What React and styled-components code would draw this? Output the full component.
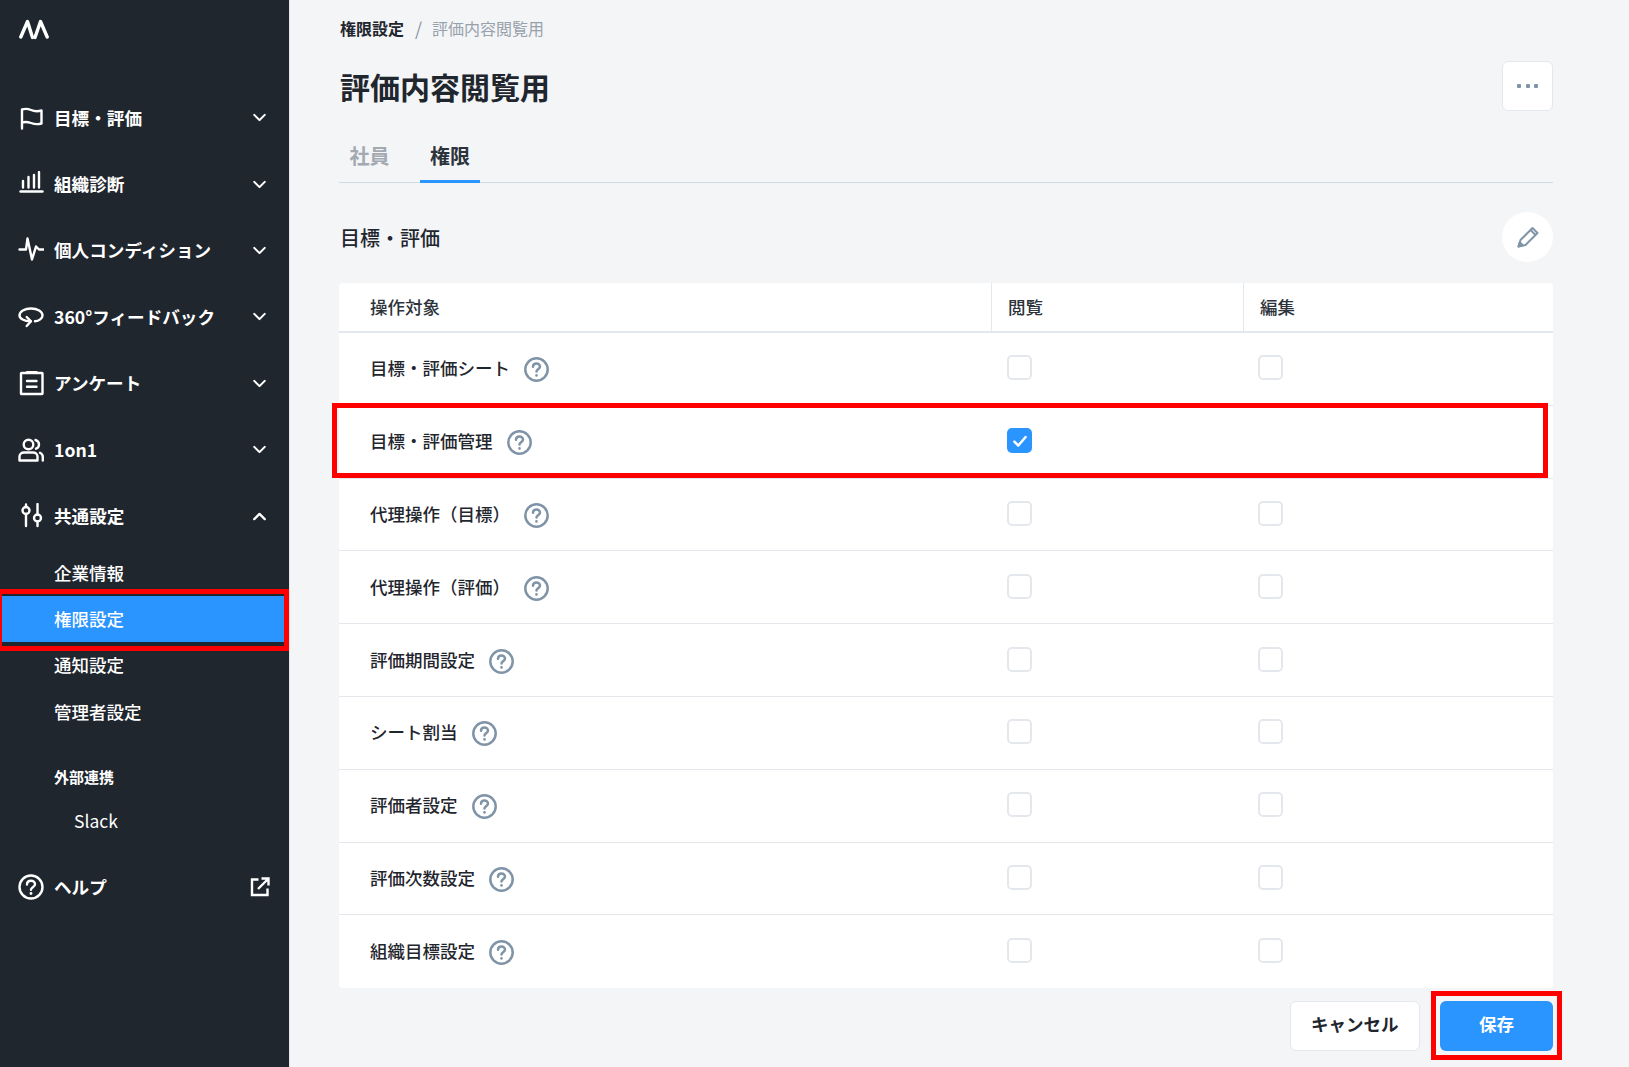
import React from 'react';
import styled, { createGlobalStyle } from 'styled-components';
import { ChevronDown, ChevronUp } from 'lucide-react';

const GlobalStyle = createGlobalStyle`
  html, body {
    margin: 0;
    padding: 0;
    background: #f3f5f7;
    font-family: "Noto Sans CJK JP", "Noto Sans", sans-serif;
    color: #1f262e;
  }
  * {
    box-sizing: border-box;
  }
`;

const Page = styled.div`
  display: flex;
  width: 1629px;
  height: 1067px;
  overflow: hidden;
  position: relative;
`;

const Sidebar = styled.aside`
  width: 290px;
  flex-shrink: 0;
  background: #1f262e;
  border-right: 1px solid #e4e8ed;
  color: #fff;
`;

const LogoBox = styled.div`
  height: 84.5px;
  padding: 19px 0 0 19px;
`;

const NavRow = styled.div`
  display: flex;
  align-items: center;
  height: 66.4px;
  padding: 0 19px 0 18px;
  font-size: 17.6px;
  font-weight: 700;
`;

const NavIcon = styled.span`
  display: flex;
  width: 26px;
  height: 26px;
  margin-right: 10px;
  flex-shrink: 0;
`;

const NavLabel = styled.span`
  flex: 1;
  line-height: 26px;
`;

const SubList = styled.div`
  display: flex;
  flex-direction: column;
`;

const SubItem = styled.div`
  display: flex;
  align-items: center;
  height: 46.3px;
  margin-right: 5px;
  padding-left: 54px;
  font-size: 17.5px;
  font-weight: 500;
  background: ${({ $active }) => ($active ? '#2a94ff' : 'transparent')};
`;

const SubHeading = styled.div`
  margin-top: 20px;
  height: 44px;
  padding-left: 54px;
  display: flex;
  align-items: center;
  font-size: 15px;
  font-weight: 700;
`;

const SubLink = styled.div`
  height: 44px;
  padding-left: 74px;
  display: flex;
  align-items: center;
  font-size: 17.5px;
`;

const HelpRow = styled(NavRow)`
  margin-top: 11px;
`;

const Main = styled.main`
  flex: 1;
  padding: 16px 76px 0 49px;
`;

const Breadcrumb = styled.div`
  display: flex;
  align-items: center;
  height: 24px;
  font-size: 16px;
  line-height: 24px;
  padding-left: 1px;
`;

const CrumbLink = styled.span`
  font-weight: 700;
`;

const CrumbSep = styled.span`
  margin: 0 10px 0 11px;
  color: #8b96a3;
  font-size: 18px;
`;

const CrumbCurrent = styled.span`
  color: #98a1ab;
`;

const TitleRow = styled.div`
  display: flex;
  align-items: center;
  justify-content: space-between;
  margin-top: 21px;
  height: 50px;
`;

const Title = styled.h1`
  margin: 0 0 0 1px;
  font-size: 30px;
  font-weight: 700;
  line-height: 44px;
`;

const MoreButton = styled.button`
  display: flex;
  align-items: center;
  justify-content: center;
  gap: 4.5px;
  width: 51px;
  height: 50px;
  padding: 0;
  background: #fff;
  border: 1px solid #e4e8ed;
  border-radius: 6px;
`;

const Dot = styled.i`
  width: 4px;
  height: 4px;
  border-radius: 1px;
  background: #8094a8;
`;

const Tabs = styled.div`
  display: flex;
  height: 52px;
  margin-top: 20px;
  border-bottom: 1px solid #d2dae4;
`;

const Tab = styled.div`
  display: flex;
  align-items: center;
  justify-content: center;
  width: 60px;
  height: 52px;
  margin-right: 21px;
  padding-left: ${({ $active }) => ($active ? '0' : '1px')};
  font-size: 20px;
  font-weight: 700;
  color: ${({ $active }) => ($active ? '#2c333b' : '#a3a9b0')};
  border-bottom: 3px solid ${({ $active }) => ($active ? '#2a94ff' : 'transparent')};
`;

const SectionRow = styled.div`
  display: flex;
  align-items: center;
  justify-content: space-between;
  height: 50px;
  margin-top: 29px;
`;

const SectionTitle = styled.h2`
  margin: 0 0 0 1px;
  font-size: 20px;
  font-weight: 500;
`;

const EditButton = styled.button`
  display: flex;
  align-items: center;
  justify-content: center;
  width: 51px;
  height: 50px;
  padding: 0;
  border: 0;
  border-radius: 50%;
  background: #fff;
`;

const TableCard = styled.div`
  margin-top: 21px;
  background: #fff;
  border-radius: 4px;
  overflow: hidden;
`;

const HeadRow = styled.div`
  display: grid;
  grid-template-columns: 652px 252px 1fr;
  height: 50px;
  border-bottom: 2px solid #e4e8ed;
`;

const HeadCell = styled.div`
  display: flex;
  align-items: center;
  padding: 0 0 2px ${({ $first }) => ($first ? '31px' : '16px')};
  font-size: 17.5px;
  font-weight: 500;
  color: #2c333b;
  border-left: ${({ $first }) => ($first ? '0' : '1px solid #e4e8ed')};
`;

const Row = styled.div`
  display: grid;
  grid-template-columns: 652px 252px 1fr;
  height: 72.8px;
  border-bottom: 1px solid ${({ $last }) => ($last ? 'transparent' : '#e4e8ed')};
`;

const NameCell = styled.div`
  display: flex;
  align-items: center;
  padding-left: 31px;
  font-size: 17.5px;
  font-weight: 500;
`;

const NameText = styled.span`
  margin-bottom: 2px;
`;

const HelpMark = styled.span`
  display: flex;
  margin: 2px 0 0 14px;
`;

const CheckCell = styled.div`
  display: flex;
  align-items: center;
  padding: 0 0 2px ${({ $pad }) => $pad}px;
`;

const CheckBox = styled.span`
  display: flex;
  align-items: center;
  justify-content: center;
  width: 25px;
  height: 25px;
  border-radius: 5px;
  border: ${({ $checked }) => ($checked ? '0' : '2px solid #e4e8ed')};
  background: ${({ $checked }) => ($checked ? '#2a94ff' : '#fff')};
`;

const Footer = styled.div`
  display: flex;
  justify-content: flex-end;
  gap: 20px;
  margin-top: 12.5px;
`;

const FooterButton = styled.button`
  height: 50px;
  width: ${({ $primary }) => ($primary ? '113px' : '130.5px')};
  padding: 0 0 4px;
  border-radius: 6px;
  border: ${({ $primary }) => ($primary ? '0' : '1px solid #e4e8ed')};
  background: ${({ $primary }) => ($primary ? '#2a94ff' : '#fff')};
  color: ${({ $primary }) => ($primary ? '#fff' : '#1f262e')};
  font-family: inherit;
  font-size: 17.5px;
  font-weight: 700;
`;

const RedBox = styled.div`
  position: absolute;
  left: ${({ $x }) => $x}px;
  top: ${({ $y }) => $y}px;
  width: ${({ $w }) => $w}px;
  height: ${({ $h }) => $h}px;
  border: 5px solid #ff0000;
  pointer-events: none;
`;

const SidebarBox = styled(RedBox)`
  border-left-width: 2px;
`;

const Stroke = ({ children }) => (
  <svg width="26" height="26" viewBox="0 0 26 26" fill="none" stroke="currentColor" strokeWidth="2.4" strokeLinecap="round" strokeLinejoin="round">
    {children}
  </svg>
);

const icons = {
  flag: (
    <Stroke>
      <path d="M4 23.5V4.500c3-1 6-.8 9 .5s7 1.500 10.500.5v13c-3.500 1-7 .8-10.500-.5s-6-1.500-9-.5" />
    </Stroke>
  ),
  chart: (
    <Stroke>
      <path d="M2.500 20.500h22" />
      <path d="M5 10v6.500M10.500 6v10.500M16 4v12.500M21 1v15.500" />
    </Stroke>
  ),
  pulse: (
    <Stroke>
      <path d="M1.500 12.500H8L9.500 1.500l4.500 21 4-13 3 3h4.500" />
    </Stroke>
  ),
  lasso: (
    <Stroke>
      <path d="M17 17.300c4-.3 7.500-2.800 7.500-5.800 0-4-5-7-11.500-7s-11.500 3-11.500 7c0 3 4.500 5.800 11.200 5.800" />
      <path d="M8.700 13l4.300 4.300L8.700 22" />
    </Stroke>
  ),
  clipboard: (
    <Stroke>
      <rect x="3" y="3" width="21.500" height="21" rx="0.5" />
      <path d="M9 2.500h9.500" strokeWidth="3" />
      <path d="M9 11h9.500M9 16.700h9.500" />
    </Stroke>
  ),
  users: (
    <Stroke>
      <circle cx="10.500" cy="7.500" r="4.800" />
      <path d="M1.500 23.500v-4c0-2.500 2-4 4.500-4h9c2.500 0 4.500 1.500 4.500 4v4z" />
      <path d="M17.500 3c2.300.8 3.500 2.500 3.500 4.500s-1.200 3.500-3 4.200M22 15.800c1.600.8 2.800 2 2.800 4.200v3.500" />
    </Stroke>
  ),
  sliders: (
    <Stroke>
      <path d="M8 1.500v2.500M8 11v12M19.500 1v10.500M19.500 18.500V23" />
      <circle cx="8" cy="7.500" r="3.500" />
      <circle cx="19.500" cy="15" r="3.500" />
    </Stroke>
  ),
  help: (
    <Stroke>
      <circle cx="13" cy="13" r="11.500" />
      <path d="M9 10.500c0-2.300 1.700-3.800 4-3.800s4 1.500 4 3.500c0 3-4 3.200-4 5.600" />
      <path d="M13 19.300v.2" strokeWidth="2.800" />
    </Stroke>
  ),
};

const QuestionIcon = () => (
  <svg width="25" height="25" viewBox="0 0 25 25" fill="none" stroke="#8094a8" strokeWidth="2.5" strokeLinecap="round">
    <circle cx="12.500" cy="12.500" r="11.200" />
    <path d="M9 9.800c0-2 1.500-3.400 3.500-3.400s3.500 1.400 3.500 3.100c0 2.700-3.500 2.900-3.500 5.100" />
    <path d="M12.500 18.300v.2" strokeWidth="2.600" />
  </svg>
);

const Logo = () => (
  <svg width="30" height="22" viewBox="0 0 30 22" fill="none" stroke="#fff" strokeWidth="3.4" strokeLinecap="round" strokeLinejoin="round">
    <path d="M1.800 18L8.500 2.500l5 16" />
    <path d="M16 18.500l5.500-16L28.200 18" />
  </svg>
);

const navItems = [
  { icon: 'flag', label: '目標・評価' },
  { icon: 'chart', label: '組織診断' },
  { icon: 'pulse', label: '個人コンディション' },
  { icon: 'lasso', label: '360°フィードバック' },
  { icon: 'clipboard', label: 'アンケート' },
  { icon: 'users', label: '1on1' },
];

const rows = [
  { name: '目標・評価シート', edit: true },
  { name: '目標・評価管理', checked: true },
  { name: '代理操作（目標）', edit: true },
  { name: '代理操作（評価）', edit: true },
  { name: '評価期間設定', edit: true },
  { name: 'シート割当', edit: true },
  { name: '評価者設定', edit: true },
  { name: '評価次数設定', edit: true },
  { name: '組織目標設定', edit: true },
];

export default function App() {
  return (
    <Page>
      <GlobalStyle />
      <Sidebar>
        <LogoBox>
          <Logo />
        </LogoBox>
        {navItems.map((item) => (
          <NavRow key={item.label}>
            <NavIcon>{icons[item.icon]}</NavIcon>
            <NavLabel>{item.label}</NavLabel>
            <ChevronDown size={21} strokeWidth={2.4} />
          </NavRow>
        ))}
        <NavRow>
          <NavIcon>{icons.sliders}</NavIcon>
          <NavLabel>共通設定</NavLabel>
          <ChevronUp size={21} strokeWidth={2.6} />
        </NavRow>
        <SubList>
          <SubItem>企業情報</SubItem>
          <SubItem $active>権限設定</SubItem>
          <SubItem>通知設定</SubItem>
          <SubItem>管理者設定</SubItem>
        </SubList>
        <SubHeading>外部連携</SubHeading>
        <SubLink>Slack</SubLink>
        <HelpRow>
          <NavIcon>{icons.help}</NavIcon>
          <NavLabel>ヘルプ</NavLabel>
          <svg width="20" height="20" viewBox="0 0 20 20" fill="none" stroke="#fff" strokeWidth="2.4">
            <path d="M8.500 2.500H2v15.500h15.500v-6.500" />
            <path d="M8 12L17.500 2.500M11.500 1.500h7v7" />
          </svg>
        </HelpRow>
      </Sidebar>

      <Main>
        <Breadcrumb>
          <CrumbLink>権限設定</CrumbLink>
          <CrumbSep>/</CrumbSep>
          <CrumbCurrent>評価内容閲覧用</CrumbCurrent>
        </Breadcrumb>
        <TitleRow>
          <Title>評価内容閲覧用</Title>
          <MoreButton>
            <Dot />
            <Dot />
            <Dot />
          </MoreButton>
        </TitleRow>
        <Tabs>
          <Tab>社員</Tab>
          <Tab $active>権限</Tab>
        </Tabs>
        <SectionRow>
          <SectionTitle>目標・評価</SectionTitle>
          <EditButton>
            <svg width="24" height="24" viewBox="0 0 24 24" fill="none" stroke="#8094a8" strokeWidth="2" strokeLinejoin="round">
              <path d="M2.500 21.500l2-6.500L16.500 3l5 5L9.500 20z" />
              <path d="M14.500 5l5 5" />
              <path d="M2.500 21.500l1.300-4.200 2.900 2.900z" fill="#8094a8" />
            </svg>
          </EditButton>
        </SectionRow>
        <TableCard>
          <HeadRow>
            <HeadCell $first>操作対象</HeadCell>
            <HeadCell>閲覧</HeadCell>
            <HeadCell>編集</HeadCell>
          </HeadRow>
          {rows.map((row, i) => (
            <Row key={row.name} $last={i === rows.length - 1}>
              <NameCell>
                <NameText>{row.name}</NameText>
                <HelpMark>
                  <QuestionIcon />
                </HelpMark>
              </NameCell>
              <CheckCell $pad={16}>
                <CheckBox $checked={row.checked}>
                  {row.checked && (
                    <svg width="18" height="18" viewBox="0 0 16 16" fill="none" stroke="#fff" strokeWidth="2.2" strokeLinecap="round" strokeLinejoin="round">
                      <path d="M3 8.500l3.500 3.500L13 4.500" />
                    </svg>
                  )}
                </CheckBox>
              </CheckCell>
              <CheckCell $pad={15}>{row.edit && <CheckBox />}</CheckCell>
            </Row>
          ))}
        </TableCard>
        <Footer>
          <FooterButton>キャンセル</FooterButton>
          <FooterButton $primary>保存</FooterButton>
        </Footer>
      </Main>

      <SidebarBox $x={0} $y={589} $w={289} $h={62} />
      <RedBox $x={332} $y={403} $w={1216} $h={75} />
      <RedBox $x={1431} $y={991} $w={131} $h={69} />
    </Page>
  );
}
